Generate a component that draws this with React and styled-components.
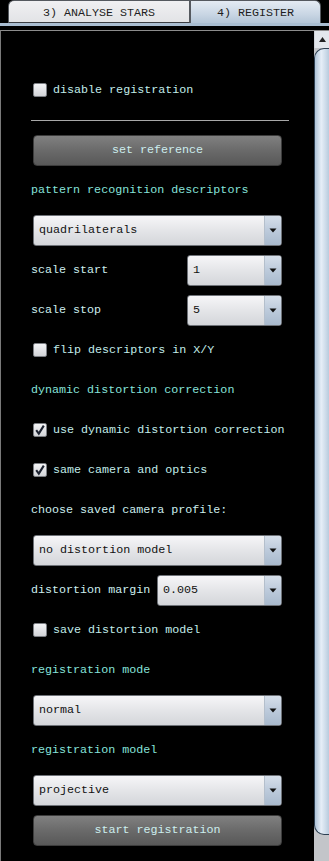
import React from "react"
import styled, { createGlobalStyle } from "styled-components"

const GlobalStyle = createGlobalStyle`
  html, body {
    margin: 0;
    padding: 0;
    background: #000;
  }
  body {
    font-family: "Liberation Mono", "Courier New", monospace;
    font-size: 11.7px;
  }
`

const Page = styled.div`
  width: 329px;
  height: 861px;
  overflow: hidden;
  display: flex;
  flex-direction: column;
  background: #000;
`

const TabBar = styled.div`
  display: flex;
  height: 23px;
  padding-left: 8px;
`

const Tab = styled.div`
  box-sizing: border-box;
  width: ${({ wide }) => wide}px;
  height: 23px;
  display: flex;
  align-items: center;
  justify-content: center;
  padding-top: 2px;
  color: #1e1e22;
  border: 1px solid #55595f;
  border-bottom: ${({ active }) => (active ? "none" : "1px solid #3a3d42")};
  border-radius: ${({ active }) => (active ? "0 6px 0 0" : "6px 0 0 0")};
  background: ${({ active }) =>
    active
      ? "linear-gradient(#e4ebf3, #c9d6e4 60%, #b4c5d7)"
      : "linear-gradient(#f0f0f2, #e2e3e6)"};
`

const TabRule = styled.div`
  height: 3px;
  background: #a9bdd1;
  margin-bottom: 4px;
`

const Panel = styled.div`
  flex: 1;
  display: flex;
  border-top: 1px solid #8c8c8c;
  border-left: 1px solid #7a7a7a;
`

const Content = styled.div`
  flex: 1;
  padding: 39px 0 0 32px;
  display: flex;
  flex-direction: column;
`

const Row = styled.div`
  width: 249px;
  height: ${({ h }) => h || 40}px;
  display: flex;
  align-items: center;
`

const Label = styled.span`
  margin-left: -2px;
  white-space: pre;
  color: ${({ head }) => (head ? "#86e2da" : "#cdeeee")};
`

const Separator = styled.div`
  flex-shrink: 0;
  margin-left: -2px;
  width: 258px;
  height: 1px;
  background: #a8a8a8;
`

const Button = styled.div`
  box-sizing: border-box;
  width: 249px;
  height: 31px;
  display: flex;
  align-items: center;
  justify-content: center;
  color: #cdeeee;
  border: 1px solid #3c3c3c;
  border-radius: 4px;
  background: linear-gradient(#808080, #6a6a6a 50%, #585858);
`

const Box = styled.span`
  box-sizing: border-box;
  width: 14px;
  height: 14px;
  margin-right: 6px;
  display: inline-flex;
  align-items: center;
  justify-content: center;
  border: 1px solid #7c7f84;
  border-radius: 2px;
  background: linear-gradient(#f4f4f6, #d2d4d8);
`

const CheckLabel = styled.span`
  color: #c2ecea;
  white-space: pre;
`

const Combo = styled.div`
  box-sizing: border-box;
  width: ${({ w }) => w || 249}px;
  height: 31px;
  margin-left: ${({ w }) => (w ? "auto" : "0")};
  display: flex;
  border: 1px solid #6e7278;
  border-radius: 3px;
  overflow: hidden;
  background: linear-gradient(#f6f6f8, #e4e5e8 50%, #d4d6da);
`

const ComboText = styled.span`
  flex: 1;
  display: flex;
  align-items: center;
  padding-left: 5px;
  color: #111;
  white-space: pre;
`

const ComboArrow = styled.span`
  width: 16px;
  display: flex;
  align-items: center;
  justify-content: center;
  border-left: 1px solid #b4bfcc;
  background: linear-gradient(#d6dfea, #bccadb 50%, #a9bacd);
`

const Scrollbar = styled.div`
  width: 15px;
  display: flex;
  flex-direction: column;
  background: #c3c5c9;
`

const ScrollUp = styled.div`
  height: 17px;
  display: flex;
  align-items: center;
  justify-content: center;
  background: #e3e7ec;
  border-left: 1px solid #d0d4da;
`

const Thumb = styled.div`
  box-sizing: border-box;
  height: 787px;
  border: 1px solid #2e4052;
  border-right: none;
  border-radius: 10px 0 0 10px;
  background: linear-gradient(90deg, #aec3d8, #e6eef7 45%, #d2dfec 70%, #b9cbdd);
`

const Check = ({ checked, children }) => (
  <Row>
    <Box>
      {checked && (
        <svg width="12" height="12" viewBox="0 0 12 12">
          <path d="M2.2 6.2 L4.8 9.6 L9.8 1.6" fill="none" stroke="#1c2230" strokeWidth="2.1" strokeLinejoin="miter" />
        </svg>
      )}
    </Box>
    <CheckLabel>{children}</CheckLabel>
  </Row>
)

const Select = ({ value, w }) => (
  <Combo w={w}>
    <ComboText>{value}</ComboText>
    <ComboArrow>
      <svg width="8" height="5" viewBox="0 0 8 5">
        <path d="M0.5 0.5 L7.5 0.5 L4 4.5 Z" fill="#111" />
      </svg>
    </ComboArrow>
  </Combo>
)

export default function App() {
  return (
    <Page>
      <GlobalStyle />
      <TabBar>
        <Tab wide={182}>3) ANALYSE STARS</Tab>
        <Tab wide={131} active>4) REGISTER</Tab>
      </TabBar>
      <TabRule />
      <Panel>
        <Content>
          <Check>disable registration</Check>
          <Row h={20}>
            <Separator />
          </Row>
          <Row>
            <Button>set reference</Button>
          </Row>
          <Row>
            <Label head>pattern recognition descriptors</Label>
          </Row>
          <Row>
            <Select value="quadrilaterals" />
          </Row>
          <Row>
            <Label>scale start</Label>
            <Select value="1" w={95} />
          </Row>
          <Row>
            <Label>scale stop</Label>
            <Select value="5" w={95} />
          </Row>
          <Check>flip descriptors in X/Y</Check>
          <Row>
            <Label head>dynamic distortion correction</Label>
          </Row>
          <Check checked>use dynamic distortion correction</Check>
          <Check checked>same camera and optics</Check>
          <Row>
            <Label>choose saved camera profile:</Label>
          </Row>
          <Row>
            <Select value="no distortion model" />
          </Row>
          <Row>
            <Label>distortion margin</Label>
            <Select value="0.005" w={125} />
          </Row>
          <Check>save distortion model</Check>
          <Row>
            <Label head>registration mode</Label>
          </Row>
          <Row>
            <Select value="normal" />
          </Row>
          <Row>
            <Label head>registration model</Label>
          </Row>
          <Row>
            <Select value="projective" />
          </Row>
          <Row>
            <Button>start registration</Button>
          </Row>
        </Content>
        <Scrollbar>
          <ScrollUp>
            <svg width="7" height="5" viewBox="0 0 7 5">
              <path d="M0 5 L7 5 L3.5 0 Z" fill="#222" />
            </svg>
          </ScrollUp>
          <Thumb />
        </Scrollbar>
      </Panel>
    </Page>
  )
}
